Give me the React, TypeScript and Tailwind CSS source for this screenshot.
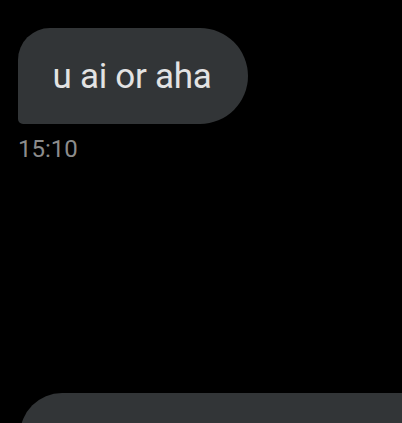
export default function App() {
  return (
    <div className="h-[423px] w-[402px] overflow-hidden bg-black font-['Roboto',sans-serif]">
      <div className="flex flex-col items-start pt-[28px] pl-[18px]">
        <div className="flex h-[96px] w-[230px] items-center justify-center rounded-tl-[32px] rounded-bl-[5px] rounded-r-[48px] bg-[#323537] pr-[2px]">
          <span className="text-[35px] leading-none tracking-[-0.3px] text-[#e3e3e3]">u ai or aha</span>
        </div>
        <div className="mt-[10px] text-[24px] leading-[30px] text-[#8c8c8c]">15:10</div>
        <div className="mt-[229px] ml-[2px] h-[60px] w-[400px] rounded-tl-[42px] bg-[#323537]" />
      </div>
    </div>
  );
}
